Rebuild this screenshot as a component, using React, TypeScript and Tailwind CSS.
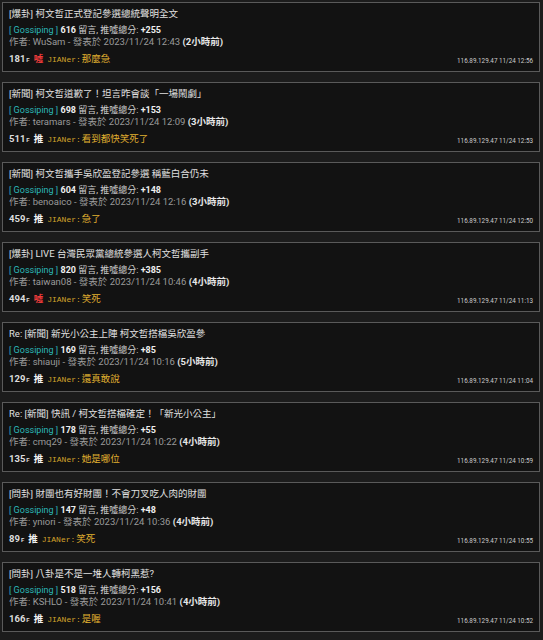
import React from "react";

type Post = {
  title: string;
  count: number;
  score: string;
  author: string;
  date: string;
  ago: string;
  floor: number;
  tag: "推" | "噓";
  push: string;
  ip: string;
};

const posts: Post[] = [
  { title: "[爆卦] 柯文哲正式登記參選總統聲明全文", count: 616, score: "+255", author: "WuSam", date: "2023/11/24 12:43", ago: "2小時前", floor: 181, tag: "噓", push: "那麼急", ip: "116.89.129.47 11/24 12:56" },
  { title: "[新聞] 柯文哲道歉了！坦言昨會談「一場鬧劇」", count: 698, score: "+153", author: "teramars", date: "2023/11/24 12:09", ago: "3小時前", floor: 511, tag: "推", push: "看到都快笑死了", ip: "116.89.129.47 11/24 12:53" },
  { title: "[新聞] 柯文哲攜手吳欣盈登記參選 稱藍白合仍未", count: 604, score: "+148", author: "benoaico", date: "2023/11/24 12:16", ago: "3小時前", floor: 459, tag: "推", push: "急了", ip: "116.89.129.47 11/24 12:50" },
  { title: "[爆卦] LIVE 台灣民眾黨總統參選人柯文哲攜副手", count: 820, score: "+385", author: "taiwan08", date: "2023/11/24 10:46", ago: "4小時前", floor: 494, tag: "噓", push: "笑死", ip: "116.89.129.47 11/24 11:13" },
  { title: "Re: [新聞] 新光小公主上陣 柯文哲搭檔吳欣盈參", count: 169, score: "+85", author: "shiauji", date: "2023/11/24 10:16", ago: "5小時前", floor: 129, tag: "推", push: "還真敢說", ip: "116.89.129.47 11/24 11:04" },
  { title: "Re: [新聞] 快訊 / 柯文哲搭檔確定！「新光小公主」", count: 178, score: "+55", author: "cmq29", date: "2023/11/24 10:22", ago: "4小時前", floor: 135, tag: "推", push: "她是哪位", ip: "116.89.129.47 11/24 10:59" },
  { title: "[問卦] 財團也有好財團！不會刀叉吃人肉的財團", count: 147, score: "+48", author: "yniori", date: "2023/11/24 10:36", ago: "4小時前", floor: 89, tag: "推", push: "笑死", ip: "116.89.129.47 11/24 10:55" },
  { title: "[問卦] 八卦是不是一堆人轉柯黑惹?", count: 518, score: "+156", author: "KSHLO", date: "2023/11/24 10:41", ago: "4小時前", floor: 166, tag: "推", push: "是喔", ip: "116.89.129.47 11/24 10:52" },
];

const PostCard = ({ p }: { p: Post }) => {
  return (
    <div className="h-[70px] border border-[#5a5a5a] bg-[#121212] px-[6px] pt-[4px]">
      <div className="text-[9.5px] leading-[13px] text-[#e0e0e0] whitespace-nowrap">{p.title}</div>
      <div className="mt-[4px] text-[9px] leading-[12px] whitespace-nowrap">
        <span className="text-[#2bb8b8]">[ Gossiping ]</span>{" "}
        <span className="font-bold text-[#eeeeee]">{p.count}</span>{" "}
        <span className="text-[#cfcfcf]">留言, 推噓總分: </span>
        <span className="font-bold text-[#eeeeee]">{p.score}</span>
      </div>
      <div className="text-[9.5px] leading-[12px] text-[#9a9a9a] whitespace-nowrap">
        作者: {p.author} - 發表於 {p.date}{" "}
        <span className="font-bold text-[#e6e6e6]">({p.ago})</span>
      </div>
      <div className="mt-[4px] flex items-end justify-between">
        <div className="flex items-baseline text-[9.5px] leading-[14px] whitespace-nowrap">
          <span className="font-bold text-[#dcdcdc]">{p.floor}</span>
          <span className="text-[6px] font-bold text-[#dcdcdc] ml-[1px]">F</span>
          <span className={"ml-[4px] font-bold " + (p.tag === "噓" ? "text-[#ee3b3b]" : "text-[#f2f2f2]")}>{p.tag}</span>
          <span className="ml-[4px] font-['Liberation_Mono',monospace] text-[8px] text-[#d4a32a]">JIANer:</span>
          <span className="ml-[1px] text-[#e0b030]">{p.push}</span>
        </div>
        <div className="text-[6.3px] leading-[9px] text-[#cccccc] whitespace-nowrap mb-[1px]">{p.ip}</div>
      </div>
    </div>
  );
};

export default function App() {
  return (
    <div className="min-h-[640px] bg-[#1c1c1c] pt-[2px] pl-[2px] pr-[3px] font-['Roboto','Noto_Sans_CJK_TC',sans-serif] flex flex-col gap-[10px]">
      {posts.map((p, i) => (
        <PostCard key={i} p={p} />
      ))}
    </div>
  );
}
